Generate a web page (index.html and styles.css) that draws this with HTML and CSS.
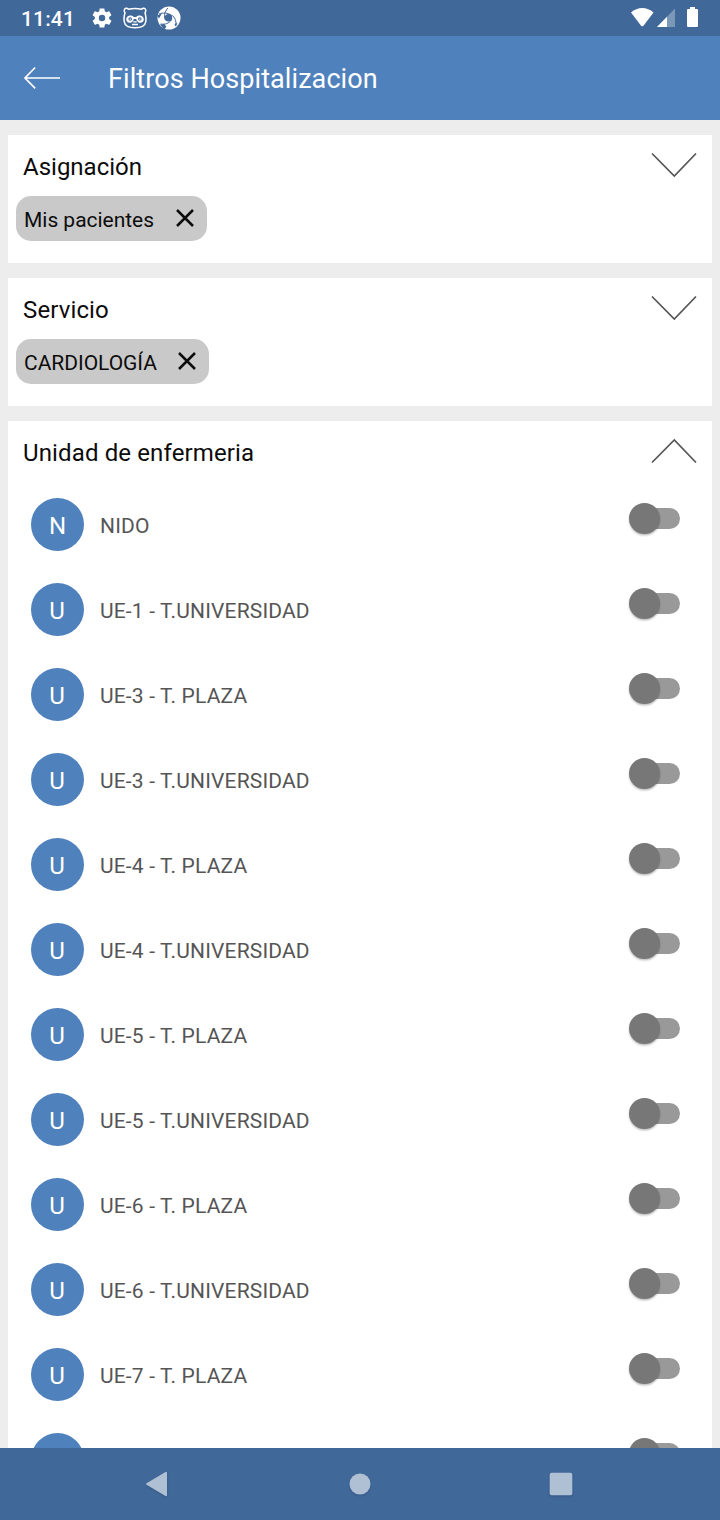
FILE: index.html
```html
<!DOCTYPE html>
<html lang="es">
<head>
<meta charset="utf-8">
<title>Filtros Hospitalizacion</title>
<link rel="stylesheet" href="styles.css">
</head>
<body>
<div class="screen">
  <header class="status">
    <span class="clock">11:41</span>
    <svg class="gear" width="20" height="20" viewBox="2 2 20 20"><path fill="#fff" fill-rule="evenodd" d="M19.14 12.94c.04-.3.06-.61.06-.94s-.02-.64-.07-.94l2.03-1.58c.18-.14.23-.41.12-.61l-1.92-3.32c-.12-.22-.37-.29-.59-.22l-2.39.96c-.5-.38-1.03-.7-1.62-.94L14.4 2.81c-.04-.24-.24-.41-.48-.41h-3.84c-.24 0-.43.17-.47.41L9.25 5.35c-.59.24-1.13.57-1.62.94l-2.39-.96c-.22-.08-.47 0-.59.22L2.74 8.87c-.12.21-.08.47.12.61l2.03 1.58c-.05.3-.09.63-.09.94s.02.64.07.94l-2.03 1.58c-.18.14-.23.41-.12.61l1.92 3.32c.12.22.37.29.59.22l2.39-.96c.5.38 1.03.7 1.62.94l.36 2.54c.05.24.24.41.48.41h3.84c.24 0 .44-.17.47-.41l.36-2.54c.59-.24 1.13-.56 1.62-.94l2.39.96c.22.08.47 0 .59-.22l1.92-3.32c.12-.22.07-.47-.12-.61zM12 15.2A3.2 3.2 0 1 1 12 8.8a3.2 3.2 0 0 1 0 6.4z"/></svg>
    <svg class="panda" width="24" height="22" viewBox="0 0 24 22" fill="none" stroke="#fff" stroke-width="1.5">
      <path d="M5.500 2.200C4 .6 1.400.8 1.200 3.500c0 1 .3 1.800.8 2.300C1 9 .9 12 1.200 14.500c.6 4.500 5 6.300 10.800 6.300s10.200-1.800 10.800-6.300c.3-2.500.2-5.500-.8-8.700.5-.5.8-1.300.8-2.300C22.600.8 20 .6 18.500 2.200c-4-.8-9-.8-13 0z"/>
      <path fill="#fff" stroke="none" fill-rule="evenodd" d="M3.200 12.300c.3-2.600 2-3.800 4-3.800 1.800 0 3 .7 3.700 1.500h2.200c.7-.8 1.900-1.500 3.700-1.500 2 0 3.700 1.200 4 3.800.1 2-1.500 3.500-3.800 3.500-2 0-3.400-1.700-3.800-3.700h-2.400c-.4 2-1.800 3.700-3.800 3.700-2.300 0-3.900-1.500-3.800-3.500zM7.200 10.200a1.800 1.800 0 1 0 0 3.600 1.800 1.800 0 0 0 0-3.600zM16.800 10.200a1.800 1.800 0 1 0 0 3.600 1.800 1.800 0 0 0 0-3.600z"/>
      <path d="M10.300 14.800h3.400M9 17.500h6" stroke-width="1.300"/>
      <path d="M7.200 11.500v1.200M16.800 11.500v1.200" stroke-width="1.200"/>
    </svg>
    <svg class="swirl" width="24" height="24" viewBox="0 0 24 24">
      <circle cx="12" cy="12" r="11.500" fill="#fff"/>
      <circle cx="11.500" cy="11.800" r="3.700" fill="#406899"/>
      <g fill="none" stroke="#406899" stroke-width="1">
        <path d="M2 8C6 6.500 11 6.500 14.500 9.500"/>
        <path d="M14.500 9C18 11 19.500 15 18.800 20"/>
        <path d="M14.800 13.500C12 17.500 8 18.700 3.500 18"/>
        <path d="M8.500 14.200C6.500 10.500 7.500 6 10.800 2"/>
      </g>
      <path d="M0 9.500 5 7.200 2 12.500zM20.500 16.500l-1.700 4-1.300-2.200zM3 18.500l4.500-.6 1.800 2.800-2 3z" fill="#406899"/>
    </svg>
    <svg class="signals" width="68" height="22" viewBox="0 0 68 22">
      <path fill="#fff" d="M0 5.500C6.500-.5 16-.5 22.500 5.500L12.500 18.700q-1.200 1.300-2.400 0z"/>
      <path fill="#7c98b9" d="M44 1.500V20H26z"/>
      <path fill="#fff" d="M36 9.700V20H26z"/>
      <path fill="#fff" d="M59 0h5v2h2q1 0 1 1v16q0 1-1 1h-9q-1 0-1-1V3q0-1 1-1h2z"/>
    </svg>
  </header>

  <div class="toolbar">
    <svg width="38" height="24" viewBox="0 0 38 24" fill="none" stroke="#fff" stroke-width="1.700"><path d="M12.200 1.500 2 12l10.200 10.300M2 12h35"/></svg>
    <h1>Filtros Hospitalizacion</h1>
  </div>

  <main class="content">
    <section class="card">
      <div class="card-head"><h2 class="tight">Asignación</h2>
        <svg class="chevron" width="46" height="26" viewBox="0 0 46 26"><path d="M1 1.500 23.300 24 45 1.500"/></svg></div>
      <div class="chip"><span>Mis pacientes</span><svg width="18" height="18" viewBox="0 0 18 18"><path d="M1 1l16 16M17 1 1 17"/></svg></div>
    </section>
    <section class="card">
      <div class="card-head"><h2>Servicio</h2>
        <svg class="chevron" width="46" height="26" viewBox="0 0 46 26"><path d="M1 1.500 23.300 24 45 1.500"/></svg></div>
      <div class="chip"><span>CARDIOLOGÍA</span><svg width="18" height="18" viewBox="0 0 18 18"><path d="M1 1l16 16M17 1 1 17"/></svg></div>
    </section>
    <section class="card open">
      <div class="card-head"><h2>Unidad de enfermeria</h2>
        <svg class="chevron" width="46" height="26" viewBox="0 0 46 26"><path d="M1 24.500 23.300 2 45 24.500"/></svg></div>
      <ul class="units">
        <li><span class="avatar">N</span><span class="name">NIDO</span><span class="switch"></span></li>
        <li><span class="avatar u">U</span><span class="name">UE-1 - T.UNIVERSIDAD</span><span class="switch"></span></li>
        <li><span class="avatar u">U</span><span class="name">UE-3 - T. PLAZA</span><span class="switch"></span></li>
        <li><span class="avatar u">U</span><span class="name">UE-3 - T.UNIVERSIDAD</span><span class="switch"></span></li>
        <li><span class="avatar u">U</span><span class="name">UE-4 - T. PLAZA</span><span class="switch"></span></li>
        <li><span class="avatar u">U</span><span class="name">UE-4 - T.UNIVERSIDAD</span><span class="switch"></span></li>
        <li><span class="avatar u">U</span><span class="name">UE-5 - T. PLAZA</span><span class="switch"></span></li>
        <li><span class="avatar u">U</span><span class="name">UE-5 - T.UNIVERSIDAD</span><span class="switch"></span></li>
        <li><span class="avatar u">U</span><span class="name">UE-6 - T. PLAZA</span><span class="switch"></span></li>
        <li><span class="avatar u">U</span><span class="name">UE-6 - T.UNIVERSIDAD</span><span class="switch"></span></li>
        <li><span class="avatar u">U</span><span class="name">UE-7 - T. PLAZA</span><span class="switch"></span></li>
        <li><span class="avatar"></span><span class="name"></span><span class="switch"></span></li>
      </ul>
    </section>
  </main>

  <nav class="navbar">
    <svg class="back" width="24" height="28" viewBox="0 0 24 28"><path d="M1.500 13.200 20.500 2q1.500-.5 1.500 1v22q0 1.500-1.500 1L1.500 14.800q-.9-.8 0-1.600z"/></svg>
    <svg class="home" width="22" height="22" viewBox="0 0 22 22"><circle cx="11" cy="11" r="10.500"/></svg>
    <svg class="recent" width="24" height="24" viewBox="0 0 24 24"><rect x=".7" y=".7" width="22.600" height="22.600" rx="2"/></svg>
  </nav>
</div>
</body>
</html>
```
FILE: styles.css
```css
* { box-sizing: border-box; }
body { margin: 0; font-family: Roboto, "Liberation Sans", sans-serif; }
h1, h2, ul { margin: 0; padding: 0; font-weight: 400; }
svg { display: block; flex: none; }

.screen { width: 720px; height: 1520px; display: flex; flex-direction: column; overflow: hidden; background: #ededed; }

.status { height: 36px; flex: none; display: flex; align-items: flex-start; padding-left: 21px; background: #406899; color: #fff; }
.clock { width: 71px; font-size: 21px; font-weight: 500; line-height: 24px; margin-top: 7px; letter-spacing: .15px; }
.gear { margin-top: 8px; }
.panda { margin: 7px 0 0 11px; }
.swirl { margin: 6px 0 0 10px; }
.signals { margin: 7px 21px 0 auto; }

.toolbar { height: 84px; flex: none; display: flex; align-items: center; padding-left: 23px; background: #4f81bc; color: #fff; }
.toolbar h1 { margin: 2px 0 0 47px; font-size: 27px; line-height: 32px; letter-spacing: .08px; }

.content { flex: 1; min-height: 0; overflow: hidden; display: flex; flex-direction: column; gap: 15px; padding: 15px 8px 0; }
.card { height: 128px; flex: none; background: #fff; }
.card.open { height: auto; }
.card-head { height: 61px; display: flex; justify-content: space-between; align-items: flex-start; padding: 18px 15px 0; }
.card-head h2 { font-size: 24px; line-height: 28px; letter-spacing: .13px; color: #0c0c0c; }
.card-head h2.tight { letter-spacing: 0; }
.chevron { fill: none; stroke: #555; stroke-width: 1.7; margin-top: -1px; }

.chip { width: max-content; height: 45px; margin-left: 8px; padding: 0 13px 0 8px; display: flex; align-items: center; gap: 22px; border-radius: 15px; background: #c9c9c9; color: #0c0c0c; font-size: 21px; letter-spacing: -.03px; }
.chip span { line-height: 24px; padding-top: 2px; }
.chip svg { fill: none; stroke: #0c0c0c; stroke-width: 2.5; margin: -1px 0 0 -.5px; }

.units { list-style: none; padding-top: 16px; }
.units li { height: 85px; display: flex; align-items: flex-start; padding: 0 32px 0 23px; }
.avatar { width: 53px; height: 53px; flex: none; border-radius: 50%; background: #4f81bc; color: #fff; font-size: 24px; line-height: 56px; text-align: center; }
.avatar.u { padding-right: 1px; }
.name { flex: 1; margin: 16px 0 0 16px; font-size: 21px; line-height: 24px; letter-spacing: .16px; color: #555; }
.switch { display: flow-root; width: 46px; height: 21px; margin-top: 10px; border-radius: 11px; background: #999; }
.switch::before { content: ""; display: block; width: 31px; height: 31px; margin: -5px 0 0 -5px; border-radius: 50%; background: #777; box-shadow: 0 1.5px 2px rgba(0,0,0,.25); }

.navbar { height: 72px; flex: none; display: flex; align-items: center; background: #406899; fill: #b0c0d4; }
.navbar svg { filter: drop-shadow(0 1px 1px rgba(0,0,0,.15)); }
.back { margin-left: 145px; }
.home { margin: -1px 0 0 179.500px; }
.recent { margin-left: 178.500px; }
```
